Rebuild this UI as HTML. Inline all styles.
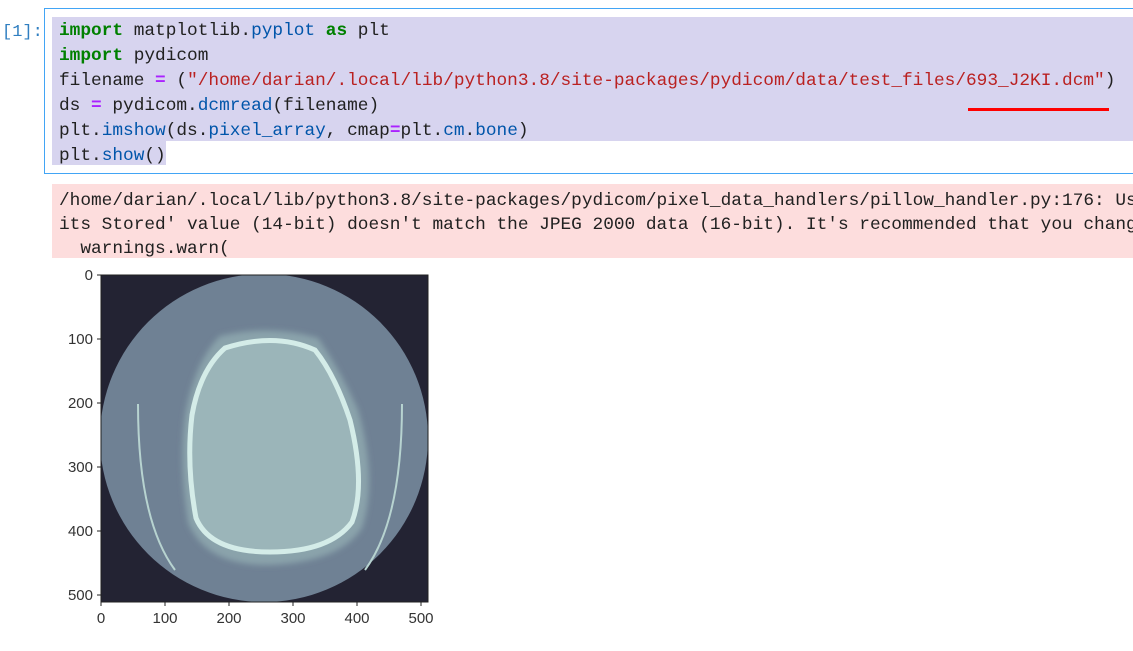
<!DOCTYPE html>
<html style="overflow:hidden"><head><style>
body{margin:0;width:1133px;height:651px;background:#fff;overflow:hidden;position:relative;font-family:"Liberation Mono",monospace}
.pr{position:absolute;left:2px;top:20px;font-size:17px;color:#307fc1;line-height:25px}
.cell{position:absolute;left:44px;top:8px;width:1089px;height:166px;border:1px solid #42a5f5;border-right:none;box-sizing:border-box}
.sel{position:absolute;background:#d7d4ef}
.code{position:absolute;left:59px;top:19px;font-size:17.8px;line-height:25px;white-space:pre;color:#212121}
.k{color:#008000;font-weight:bold}.b{color:#0055aa}.s{color:#ba2121}.o{color:#aa22ff;font-weight:bold}
.err{position:absolute;left:52px;top:184px;width:1081px;height:74px;background:#fddddd}
.et{position:absolute;left:59px;top:189px;font-size:17.8px;line-height:24px;white-space:pre;color:#212121;width:1074px;overflow:hidden}
.ax{font-family:"Liberation Sans",sans-serif;font-size:15px;fill:#333}
</style></head><body>
<div class="pr">[1]:</div>
<div class="cell"></div>
<div class="sel" style="left:52px;top:17px;width:1081px;height:124px"></div>
<div class="sel" style="left:52px;top:141px;width:114px;height:24px"></div>
<div class="code"><span class="k">import</span> matplotlib.<span class="b">pyplot</span> <span class="k">as</span> plt
<span class="k">import</span> pydicom
filename <span class="o">=</span> (<span class="s">"/home/darian/.local/lib/python3.8/site-packages/pydicom/data/test_files/693_J2KI.dcm"</span>)
ds <span class="o">=</span> pydicom.<span class="b">dcmread</span>(filename)
plt.<span class="b">imshow</span>(ds.<span class="b">pixel_array</span>, cmap<span class="o">=</span>plt.<span class="b">cm</span>.<span class="b">bone</span>)
plt.<span class="b">show</span>()</div>
<div style="position:absolute;left:968px;top:108px;width:141px;height:3px;background:#f00"></div>
<div class="err"></div>
<div class="et">/home/darian/.local/lib/python3.8/site-packages/pydicom/pixel_data_handlers/pillow_handler.py:176: UserWarning
its Stored' value (14-bit) doesn't match the JPEG 2000 data (16-bit). It's recommended that you change
  warnings.warn(</div>
<svg style="position:absolute;left:0;top:260px" width="450" height="391">
<defs><clipPath id="c"><rect x="101" y="15" width="327" height="327"/></clipPath>
<filter id="bl"><feGaussianBlur stdDeviation="3"/></filter></defs>
<rect x="101" y="15" width="327" height="327" fill="#232333"/>
<g clip-path="url(#c)">
<circle cx="264" cy="178" r="164" fill="#6f8194"/>
<path d="M220 76 Q270 64 318 78 Q340 110 358 150 Q378 220 362 268 Q340 302 270 305 Q205 306 188 262 Q178 200 186 150 Q196 100 220 76Z" fill="#8aa3ab" filter="url(#bl)"/>
<path d="M225 88 Q275 72 315 90 Q335 115 350 160 Q366 225 352 262 Q330 292 270 292 Q210 292 196 258 Q186 205 192 155 Q200 110 225 88Z" fill="#9bb5b9" stroke="#d4ece8" stroke-width="5"/>
<path d="M138 144 Q138 260 175 310" fill="none" stroke="#b7d3d0" stroke-width="2"/>
<path d="M402 144 Q402 260 365 310" fill="none" stroke="#b7d3d0" stroke-width="2"/>
</g>
<rect x="101" y="15" width="327" height="327" fill="none" stroke="#222" stroke-width="1"/>
<g stroke="#222"><line x1="97" y1="15" x2="101" y2="15"/><line x1="97" y1="79" x2="101" y2="79"/><line x1="97" y1="143" x2="101" y2="143"/><line x1="97" y1="207" x2="101" y2="207"/><line x1="97" y1="271" x2="101" y2="271"/><line x1="97" y1="335" x2="101" y2="335"/>
<line x1="101" y1="342" x2="101" y2="346"/><line x1="165" y1="342" x2="165" y2="346"/><line x1="229" y1="342" x2="229" y2="346"/><line x1="293" y1="342" x2="293" y2="346"/><line x1="357" y1="342" x2="357" y2="346"/><line x1="421" y1="342" x2="421" y2="346"/></g>
<g class="ax" text-anchor="end"><text x="93" y="20">0</text><text x="93" y="84">100</text><text x="93" y="148">200</text><text x="93" y="212">300</text><text x="93" y="276">400</text><text x="93" y="340">500</text></g>
<g class="ax" text-anchor="middle"><text x="101" y="363">0</text><text x="165" y="363">100</text><text x="229" y="363">200</text><text x="293" y="363">300</text><text x="357" y="363">400</text><text x="421" y="363">500</text></g>
</svg>
</body></html>
